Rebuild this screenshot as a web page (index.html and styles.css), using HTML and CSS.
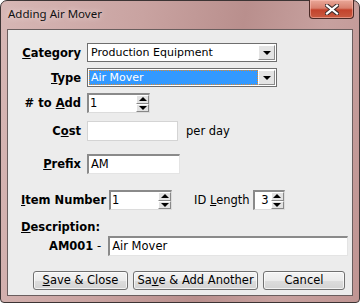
FILE: index.html
```
<!DOCTYPE html>
<html lang="en">
<head>
    <meta charset="UTF-8">
    <title>Adding Air Mover</title>
    <link rel="stylesheet" href="styles.css">
</head>
<body>
    <div class="window">
        <div class="titlebar">
            <span class="title">Adding Air Mover</span>
            <div class="close-btn">
                <svg width="14" height="11" viewBox="0 0 14 11">
                    <path d="M2 1.5 L12 9.5 M12 1.5 L2 9.5" stroke="#3b2b2b" stroke-width="4.2" stroke-linecap="square"/>
                    <path d="M2 1.5 L12 9.5 M12 1.5 L2 9.5" stroke="#ffffff" stroke-width="2.2" stroke-linecap="square"/>
                </svg>
            </div>
        </div>
        <div class="client">
            <div class="row row-category">
                <label class="lbl"><u>C</u>ategory</label>
                <div class="select">
                    <span class="select-text">Production Equipment</span>
                    <span class="drop-btn"><i class="tri-down"></i></span>
                </div>
            </div>
            <div class="row row-type">
                <label class="lbl"><u>T</u>ype</label>
                <div class="select">
                    <span class="select-text selected">Air Mover</span>
                    <span class="drop-btn"><i class="tri-down"></i></span>
                </div>
            </div>
            <div class="row row-add">
                <label class="lbl"># to <u>A</u>dd</label>
                <div class="spin spin-add">
                    <span class="spin-value">1</span>
                    <span class="spin-btns">
                        <span class="spin-b"><i class="tri-up"></i></span>
                        <span class="spin-b"><i class="tri-down"></i></span>
                    </span>
                </div>
            </div>
            <div class="row row-cost">
                <label class="lbl">C<u>o</u>st</label>
                <div class="input flat cost"></div>
                <span class="unit">per day</span>
            </div>
            <div class="row row-prefix">
                <label class="lbl"><u>P</u>refix</label>
                <div class="input sunken prefix">AM</div>
            </div>
            <div class="row row-item">
                <label class="lbl-inline"><u>I</u>tem Number</label>
                <div class="spin spin-item">
                    <span class="spin-value">1</span>
                    <span class="spin-btns">
                        <span class="spin-b"><i class="tri-up"></i></span>
                        <span class="spin-b"><i class="tri-down"></i></span>
                    </span>
                </div>
                <span class="id-label">ID <u>L</u>ength</span>
                <div class="spin spin-len">
                    <span class="spin-value right">3</span>
                    <span class="spin-btns">
                        <span class="spin-b"><i class="tri-up"></i></span>
                        <span class="spin-b"><i class="tri-down"></i></span>
                    </span>
                </div>
            </div>
            <div class="desc-label"><u>D</u>escription:</div>
            <div class="row row-desc">
                <span class="code"><b>AM001</b> -</span>
                <div class="input sunken desc">Air Mover</div>
            </div>
            <div class="buttons">
                <div class="btn btn-close"><u>S</u>ave &amp; Close</div>
                <div class="btn btn-another">Sa<u>v</u>e &amp; Add Another</div>
                <div class="btn btn-cancel">Cancel</div>
            </div>
        </div>
    </div>
</body>
</html>
```

FILE: styles.css
```
body {
    margin: 0;
    background: #ffffff;
    font-family: 'DejaVu Sans', sans-serif;
    font-size: 11px;
    color: #000;
}
.window {
    width: 360px;
    height: 303px;
    box-sizing: border-box;
    border: 1px solid #3c3434;
    border-radius: 7px 7px 4px 4px;
    background: linear-gradient(100deg, #d7b7b5 0%, #c9a3a1 35%, #b98f8d 60%, #c7a19f 80%, #c09593 100%);
    padding: 0 6px 6px 6px;
    display: flex;
    flex-direction: column;
}
.titlebar {
    height: 28px;
    display: flex;
    align-items: flex-start;
    position: relative;
}
.title {
    font-family: 'Noto Sans', sans-serif;
    font-size: 11.5px;
    margin-top: 5px;
    margin-left: 1px;
    color: #111;
    text-shadow: 0 0 6px rgba(255, 240, 240, 0.9);
}
.close-btn {
    position: absolute;
    right: -1px;
    top: -1px;
    width: 45px;
    height: 19px;
    box-sizing: border-box;
    border: 1px solid #4a2a26;
    border-top: none;
    border-radius: 0 0 4px 4px;
    background: linear-gradient(#e9a899 0%, #d8806e 45%, #c3432c 55%, #c85a40 100%);
    display: flex;
    align-items: center;
    justify-content: center;
    box-shadow: inset 0 0 0 1px rgba(255, 200, 190, 0.5);
}
.client {
    flex: 1;
    background: #ececec;
    border: 1px solid #6a5e5e;
    padding-top: 13px;
    display: flex;
    flex-direction: column;
}
.row {
    display: flex;
    align-items: center;
}
.lbl {
    width: 73px;
    text-align: right;
    font-weight: bold;
    font-size: 11.5px;
    margin-right: 6px;
}
.row-category { height: 19px; }
.row-type { height: 19px; margin-top: 6px; }
.row-add { height: 20px; margin-top: 6px; }
.row-cost { height: 20px; margin-top: 8px; }
.row-prefix { height: 20px; margin-top: 13px; }
.row-item { height: 20px; margin-top: 16px; padding-left: 13px; }
.select {
    width: 190px;
    height: 19px;
    box-sizing: border-box;
    border: 1px solid #6e6e6e;
    background: #fff;
    display: flex;
    padding: 1px;
}
.select-text {
    flex: 1;
    padding-left: 2px;
    line-height: 15px;
}
.select-text.selected {
    background: #3399ff;
    color: #fff;
    outline: 1px dotted #e08a2c;
    outline-offset: -1px;
}
.drop-btn {
    width: 17px;
    box-sizing: border-box;
    background: #e4e4e4;
    border-top: 1px solid #fff;
    border-left: 1px solid #fff;
    border-right: 1px solid #8c8c8c;
    border-bottom: 1px solid #8c8c8c;
    display: flex;
    align-items: center;
    justify-content: center;
}
.tri-down {
    width: 0;
    height: 0;
    border-left: 4px solid transparent;
    border-right: 4px solid transparent;
    border-top: 4px solid #000;
}
.tri-up {
    width: 0;
    height: 0;
    border-left: 4px solid transparent;
    border-right: 4px solid transparent;
    border-bottom: 4px solid #000;
}
.spin {
    height: 20px;
    box-sizing: border-box;
    border-top: 2px solid #8a8a8a;
    border-left: 2px solid #8a8a8a;
    border-right: 1px solid #dcdcdc;
    border-bottom: 1px solid #dcdcdc;
    background: #fff;
    display: flex;
}
.spin-add { width: 63px; }
.spin-item { width: 63px; }
.spin-len { width: 32px; }
.spin-value {
    flex: 1;
    padding-left: 1px;
    line-height: 16px;
    font-size: 11.5px;
}
.spin-value.right {
    text-align: right;
    padding-right: 2px;
}
.spin-btns {
    width: 13px;
    display: flex;
    flex-direction: column;
}
.spin-b {
    flex: 1;
    box-sizing: border-box;
    background: #e2e2e2;
    border-top: 1px solid #fff;
    border-left: 1px solid #fff;
    border-right: 1px solid #888;
    border-bottom: 1px solid #888;
    display: flex;
    align-items: center;
    justify-content: center;
}
.input {
    height: 20px;
    box-sizing: border-box;
    background: #fff;
    line-height: 16px;
    padding-left: 2px;
    font-size: 11.5px;
}
.input.flat {
    border: 1px solid #d4d4d4;
}
.input.sunken {
    border-top: 2px solid #8a8a8a;
    border-left: 2px solid #8a8a8a;
    border-right: 1px solid #e4e4e4;
    border-bottom: 1px solid #e4e4e4;
}
.cost { width: 91px; }
.prefix { width: 93px; }
.unit {
    margin-left: 8px;
    font-size: 11.5px;
}
.lbl-inline {
    font-weight: bold;
    font-size: 11.5px;
    margin-right: 3px;
}
.id-label {
    margin-left: 22px;
    margin-right: 3px;
    font-size: 11.5px;
}
.desc-label {
    margin-top: 10px;
    padding-left: 13px;
    font-weight: bold;
    font-size: 11.5px;
    line-height: 15px;
}
.row-desc {
    height: 20px;
    margin-top: 1px;
    padding-left: 41px;
}
.code {
    font-size: 11.5px;
    margin-right: 7px;
}
.desc { width: 240px; }
.buttons {
    display: flex;
    gap: 5px;
    padding-left: 25px;
    margin-top: 15px;
}
.btn {
    height: 19px;
    box-sizing: border-box;
    border: 1px solid #707070;
    border-radius: 3px;
    background: linear-gradient(#f4f4f4 0%, #ebebeb 50%, #dddddd 51%, #d3d3d3 100%);
    box-shadow: inset 0 0 0 1px rgba(255, 255, 255, 0.7);
    text-align: center;
    line-height: 16px;
    font-size: 11.5px;
}
.btn-close { width: 95px; }
.btn-another { width: 125px; }
.btn-cancel { width: 82px; }
```
